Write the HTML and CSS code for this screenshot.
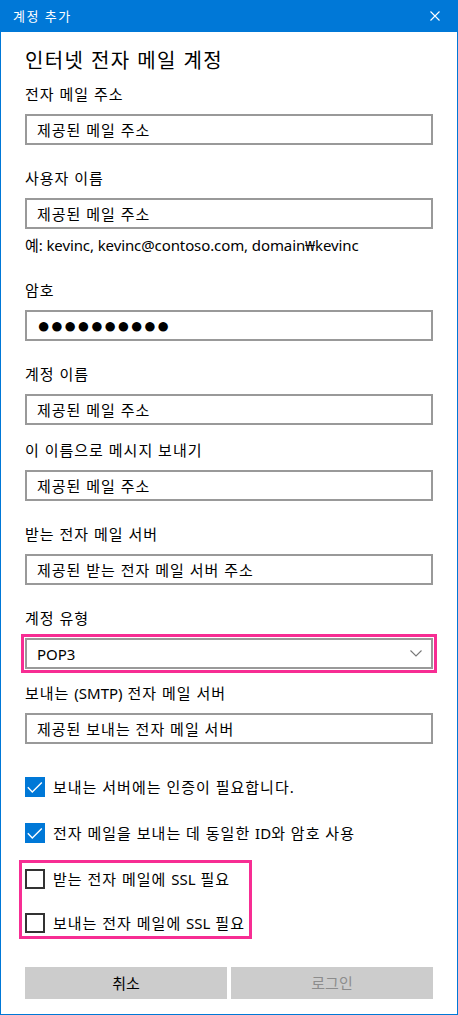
FILE: index.html
```html
<!DOCTYPE html>
<html lang="ko">
<head>
  <meta charset="UTF-8" />
  <meta name="viewport" content="width=device-width, initial-scale=1.0"/>
  <title>계정 추가</title>
  <link rel="stylesheet" href="styles.css">
</head>
<body>

  <div class="window">
    <div class="titlebar">
      <span class="title">계정 추가</span>
      <svg class="close" width="10" height="10" viewBox="0 0 10 10">
        <path d="M0.5 0.5 L9.5 9.5 M9.5 0.5 L0.5 9.5" stroke="#fff" stroke-width="1.1" fill="none"/>
      </svg>
    </div>

    <div class="content">
      <h1 class="heading">인터넷 전자 메일 계정</h1>

      <div class="field first">
        <div class="label">전자 메일 주소</div>
        <div class="input">제공된 메일 주소</div>
      </div>

      <div class="field">
        <div class="label">사용자 이름</div>
        <div class="input">제공된 메일 주소</div>
      </div>
      <div class="hint">예: kevinc, kevinc@contoso.com, domain₩kevinc</div>

      <div class="field after-hint">
        <div class="label">암호</div>
        <div class="input password">●●●●●●●●●●</div>
      </div>

      <div class="field">
        <div class="label">계정 이름</div>
        <div class="input">제공된 메일 주소</div>
      </div>

      <div class="field tight">
        <div class="label">이 이름으로 메시지 보내기</div>
        <div class="input">제공된 메일 주소</div>
      </div>

      <div class="field">
        <div class="label">받는 전자 메일 서버</div>
        <div class="input">제공된 받는 전자 메일 서버 주소</div>
      </div>

      <div class="field">
        <div class="label">계정 유형</div>
        <div class="highlight select-mark">
          <div class="input select">
            <span class="latin">POP3</span>
            <svg class="chevron" width="12" height="7" viewBox="0 0 12 7">
              <path d="M0.5 0.5 L6 6 L11.5 0.5" stroke="#777" stroke-width="1.1" fill="none"/>
            </svg>
          </div>
        </div>
      </div>

      <div class="field after-select">
        <div class="label">보내는 <span class="latin">(SMTP)</span> 전자 메일 서버</div>
        <div class="input">제공된 보내는 전자 메일 서버</div>
      </div>

      <div class="checks">
        <div class="check-row">
          <span class="box checked">
            <svg width="20" height="20" viewBox="0 0 20 20">
              <path d="M2.8 10.3 L7.3 15 L16.8 5.6" stroke="#fff" stroke-width="1.4" fill="none"/>
            </svg>
          </span>
          <span>보내는 서버에는 인증이 필요합니다.</span>
        </div>
        <div class="check-row">
          <span class="box checked">
            <svg width="20" height="20" viewBox="0 0 20 20">
              <path d="M2.8 10.3 L7.3 15 L16.8 5.6" stroke="#fff" stroke-width="1.4" fill="none"/>
            </svg>
          </span>
          <span>전자 메일을 보내는 데 동일한 <span class="latin">ID</span>와 암호 사용</span>
        </div>
        <div class="highlight ssl-mark">
          <div class="check-row">
            <span class="box"></span>
            <span>받는 전자 메일에 <span class="latin">SSL</span> 필요</span>
          </div>
          <div class="check-row">
            <span class="box"></span>
            <span>보내는 전자 메일에 <span class="latin">SSL</span> 필요</span>
          </div>
        </div>
      </div>

      <div class="buttons">
        <button class="btn">취소</button>
        <button class="btn disabled">로그인</button>
      </div>
    </div>
  </div>

</body>
</html>
```

FILE: styles.css
```css
:root {
  --blue: #0078d7;
  --pink: #f72d93;
  --border: #999999;
  --text: #000000;
}
* {
  box-sizing: border-box;
  margin: 0;
  padding: 0;
}
html, body {
  width: 458px;
  height: 1015px;
  background: #ffffff;
}
body {
  font-family: "Noto Sans", "Noto Sans CJK KR", sans-serif;
  font-size: 15px;
  line-height: 20px;
  letter-spacing: 1px;
  color: var(--text);
}
.latin {
  letter-spacing: 0;
}
.window {
  height: 1015px;
  border: 1px solid var(--blue);
  border-top: 0;
}
.titlebar {
  height: 32px;
  margin: 0 -1px;
  background: var(--blue);
  color: #ffffff;
  display: flex;
  align-items: center;
  justify-content: space-between;
  padding: 0 18px 0 13px;
}
.title {
  font-size: 13px;
  line-height: 16px;
  letter-spacing: 1.5px;
}
.close {
  display: block;
}
.content {
  padding: 15px 24px 0;
}
.heading {
  font-size: 20px;
  line-height: 28px;
  font-weight: normal;
  letter-spacing: 1.4px;
  margin-bottom: 9px;
}
.field {
  margin-top: 23px;
}
.field.first {
  margin-top: 0;
}
.field.after-hint {
  margin-top: 25px;
}
.field.tight {
  margin-top: 15px;
}
.field.after-select {
  margin-top: 14px;
}
.label {
  margin-bottom: 10px;
}
.input {
  height: 31px;
  border: 2px solid var(--border);
  padding: 0 10px;
  display: flex;
  align-items: center;
  white-space: nowrap;
}
.password {
  font-family: "Liberation Sans", sans-serif;
  font-size: 22px;
  letter-spacing: 0;
}
.hint {
  margin-top: 6px;
  letter-spacing: -0.1px;
}
.highlight {
  border: 3px solid var(--pink);
}
.select-mark {
  margin: -4px -4px -4px;
  padding: 1px;
}
.select {
  justify-content: space-between;
  padding-right: 9px;
}
.chevron {
  display: block;
}
.checks {
  margin-top: 33px;
}
.check-row {
  display: flex;
  align-items: center;
  gap: 8px;
  height: 20px;
}
.check-row + .check-row {
  margin-top: 26px;
}
.ssl-mark {
  width: fit-content;
  margin: 17px 0 0 -6px;
  padding: 6px 4px 3px 3px;
}
.ssl-mark .check-row + .check-row {
  margin-top: 24px;
}
.box {
  width: 20px;
  height: 20px;
  border: 2px solid #333333;
  flex: none;
}
.box.checked {
  border: 0;
  background: var(--blue);
}
.box svg {
  display: block;
}
.buttons {
  display: grid;
  grid-template-columns: 1fr 1fr;
  gap: 4px;
  margin-top: 28px;
}
.btn {
  height: 32px;
  border: 0;
  background: #cccccc;
  font: inherit;
  color: var(--text);
}
.btn.disabled {
  color: #8c8c8c;
}
```
